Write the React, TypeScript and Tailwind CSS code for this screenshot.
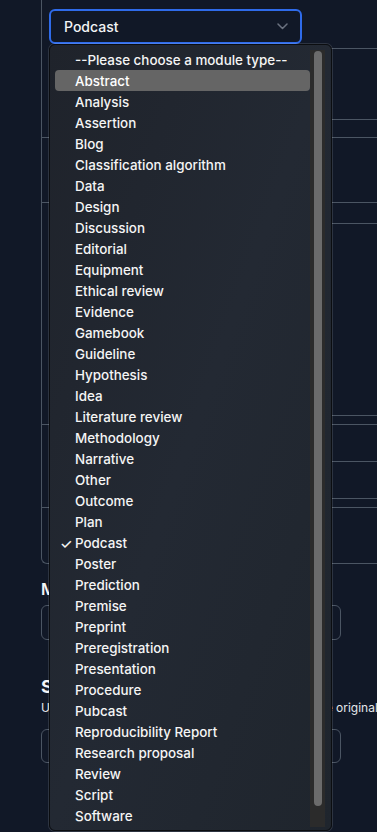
import React from "react";

const items = [
  "--Please choose a module type--",
  "Abstract",
  "Analysis",
  "Assertion",
  "Blog",
  "Classification algorithm",
  "Data",
  "Design",
  "Discussion",
  "Editorial",
  "Equipment",
  "Ethical review",
  "Evidence",
  "Gamebook",
  "Guideline",
  "Hypothesis",
  "Idea",
  "Literature review",
  "Methodology",
  "Narrative",
  "Other",
  "Outcome",
  "Plan",
  "Podcast",
  "Poster",
  "Prediction",
  "Premise",
  "Preprint",
  "Preregistration",
  "Presentation",
  "Procedure",
  "Pubcast",
  "Reproducibility Report",
  "Research proposal",
  "Review",
  "Script",
  "Software",
];

export default function App() {
  return (
    <div
      className="relative w-[377px] h-[832px] overflow-hidden bg-[#111827] text-[#f3f4f6]"
      style={{ fontFamily: "Inter, 'Noto Sans', sans-serif" }}
    >
      {/* Background form */}
      <div className="ml-[41px] w-[400px] border-l border-b border-[#4b5563] rounded-bl-md">
        <div className="h-[138px] border-b border-[#4b5563] flex flex-col">
          <div className="pt-[9px] pl-[7px]">
            <div className="w-[253px] h-[35px] rounded-md border-2 border-[#2f6bea] flex items-center justify-between pl-[13px] pr-[12px]">
              <span className="text-[14px] font-medium text-[#f3f4f6]">Podcast</span>
              <svg width="11" height="7" viewBox="0 0 11 7" fill="none">
                <path d="M1 1l4.5 4.5L10 1" stroke="#6b7280" strokeWidth="1.5" strokeLinecap="round" strokeLinejoin="round" />
              </svg>
            </div>
          </div>
          <div className="ml-[40px] mt-[4px] h-[72px] border-t border-b border-[#4b5563]" />
        </div>
        <div className="h-[65px] border-b border-[#4b5563]" />
        <div className="h-[222px] border-b border-[#4b5563] pt-[20px]">
          <div className="ml-[40px] h-[193px] border-t border-b border-[#4b5563]" />
        </div>
        <div className="h-[83px] border-b border-[#4b5563] pt-[36px]">
          <div className="ml-[40px] h-[38px] border-t border-b border-[#4b5563]" />
        </div>
        <div className="h-[55px]" />
      </div>

      <div className="pl-[41px] pr-4">
        <div className="mt-[15px] text-[16px] font-semibold leading-[20px]">Module title</div>
        <div className="mt-[6px] h-[35px] w-[300px] rounded-md border border-[#4b5563]" />
        <div className="mt-[36px] text-[18px] font-bold leading-[22px]">Source</div>
        <div className="mt-[2px] text-[12px] leading-[16px] text-[#e5e7eb] whitespace-nowrap">
          Upload a file or paste a link that goes directly to the original
        </div>
        <div className="mt-[13px] h-[34px] w-[300px] rounded-md border border-[#4b5563]" />
      </div>

      {/* Dropdown menu overlay */}
      <div className="absolute left-[49px] top-[44px] w-[283px] h-[787px] rounded-md border border-[#0b0d10] bg-gradient-to-br from-[#1f232b] via-[#232933] to-[#1f252d] shadow-[0_0_0_1px_rgba(255,255,255,0.12)] flex">
        <div className="flex-1 pt-[4px] pl-[5px]">
          {items.map((it) => (
            <div
              key={it}
              className={
                "relative h-[21px] flex items-center pt-[2px] pl-[20px] text-[13.4px] font-medium leading-[19px] rounded-[4px] " +
                (it === "Abstract" ? "bg-[#656565] text-white" : "text-[#f5f5f5]")
              }
            >
              {it === "Podcast" && (
                <span className="absolute left-[5px] text-[14px]">✓</span>
              )}
              {it}
            </div>
          ))}
        </div>
        <div className="w-[15px] mt-[5px] mb-[3px] mr-[6px] bg-[#2b2b2b] flex justify-center pt-[1px]">
          <div className="w-[8px] h-[755px] rounded-full bg-[#6b6b6b]" />
        </div>
      </div>
    </div>
  );
}
